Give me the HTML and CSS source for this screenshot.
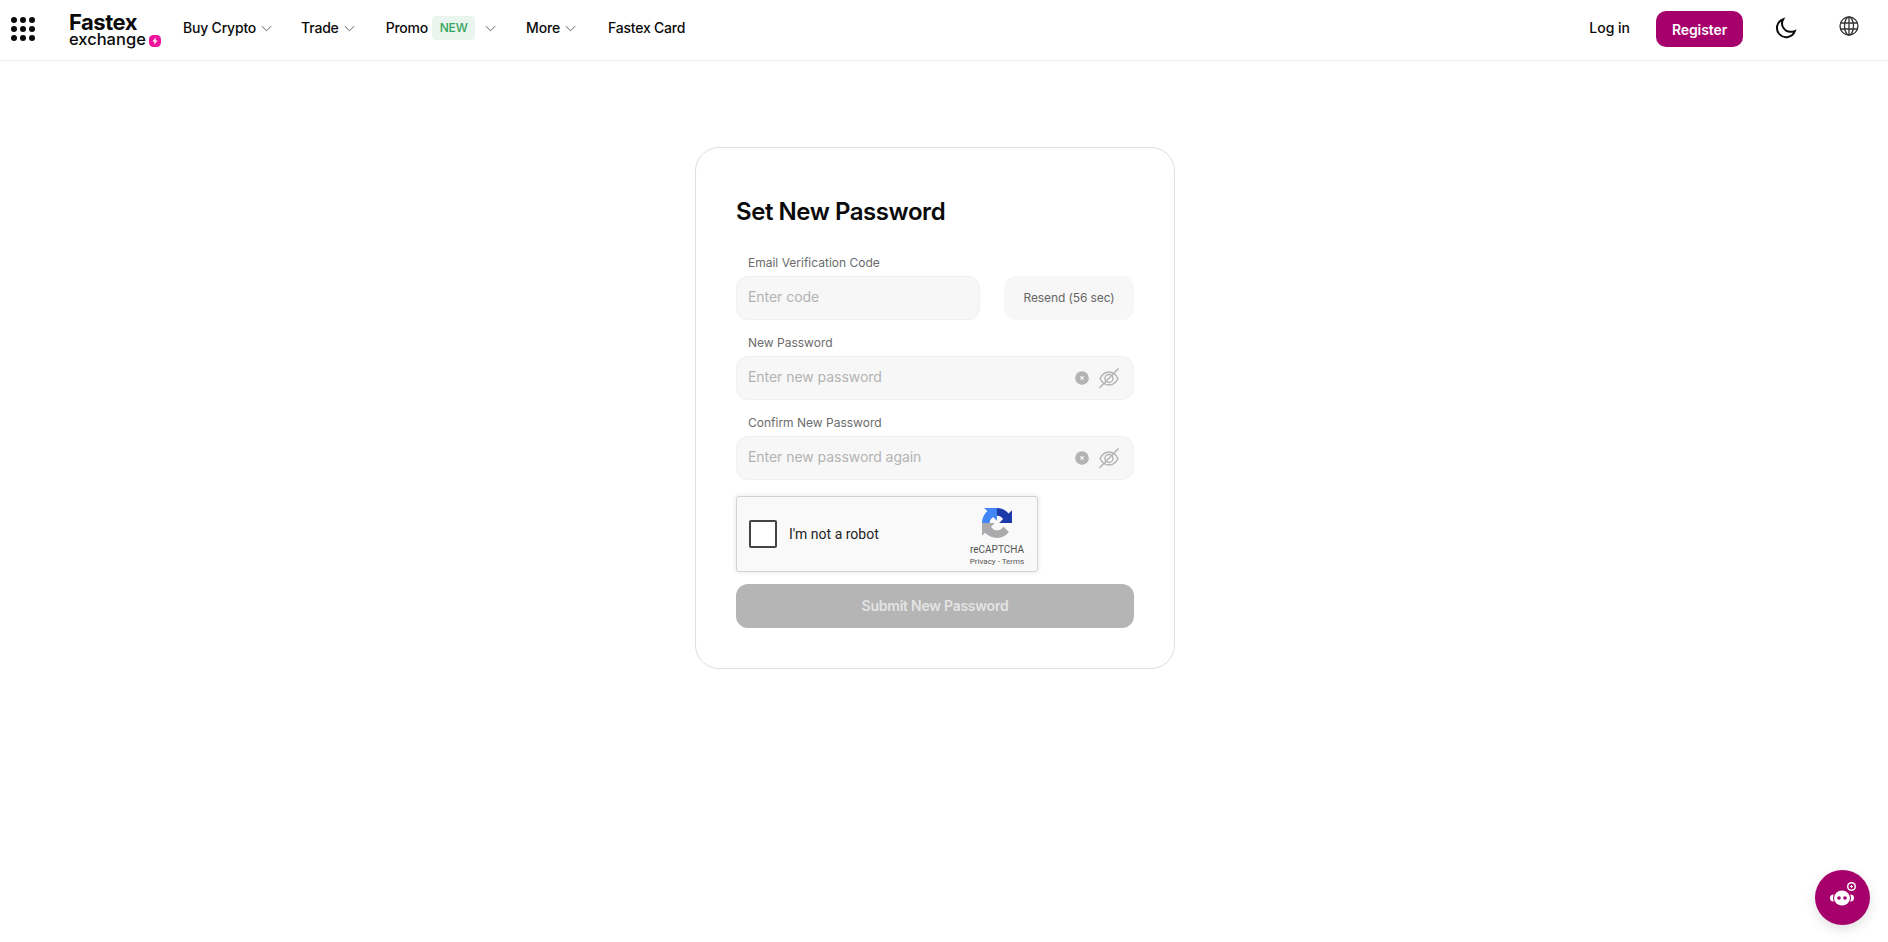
FILE: index.html
```html
<!DOCTYPE html>
<html lang="en">

<head>
    <meta charset="UTF-8" />
    <meta name="viewport" content="width=device-width, initial-scale=1.0" />
    <title>Set New Password</title>
    <link rel="stylesheet" href="styles.css">
</head>

<body>
    <!-- Header -->
    <header class="header">
        <div class="apps-grid">
            <i></i><i></i><i></i><i></i><i></i><i></i><i></i><i></i><i></i>
        </div>
        <a class="logo" href="#">
            <span class="logo-top">Fastex</span>
            <span class="logo-bottom">exchange
                <svg class="logo-bolt" viewBox="0 0 12 12">
                    <rect width="12" height="12" rx="4.5" fill="#f0129a" />
                    <path d="M6.9 2.2 3.4 6.6h2.2l-.5 3.2 3.5-4.4H6.4z" fill="#fff" />
                </svg>
            </span>
        </a>
        <nav class="nav">
            <a class="nav-item nav-buy" href="#">Buy Crypto
                <svg class="chevron" viewBox="0 0 12 7"><path d="M1 1l5 5 5-5" /></svg>
            </a>
            <a class="nav-item nav-trade" href="#">Trade
                <svg class="chevron" viewBox="0 0 12 7"><path d="M1 1l5 5 5-5" /></svg>
            </a>
            <a class="nav-item nav-promo" href="#">Promo
                <span class="badge-new">NEW</span>
                <svg class="chevron" viewBox="0 0 12 7"><path d="M1 1l5 5 5-5" /></svg>
            </a>
            <a class="nav-item nav-more" href="#">More
                <svg class="chevron" viewBox="0 0 12 7"><path d="M1 1l5 5 5-5" /></svg>
            </a>
            <a class="nav-item" href="#">Fastex Card</a>
        </nav>
        <div class="header-right">
            <a class="login" href="#">Log in</a>
            <button class="register">Register</button>
            <svg class="moon" viewBox="0 0 24 24">
                <path d="M9.2 3.2a9.2 9.2 0 1 0 11.6 11.9 8 8 0 0 1-3.2.6A8.4 8.4 0 0 1 9.2 3.2z" />
            </svg>
            <svg class="globe" viewBox="0 0 20 20">
                <circle cx="10" cy="10" r="9" />
                <ellipse cx="10" cy="10" rx="4.500" ry="9" />
                <path d="M1.600 7h16.800M1.600 13h16.800M10 1v18" />
            </svg>
        </div>
    </header>

    <main class="main">
        <form class="card">
            <h1 class="title">Set New Password</h1>

            <label class="label">Email Verification Code</label>
            <div class="code-row">
                <input class="input" type="text" placeholder="Enter code" />
                <button class="resend" type="button">Resend (56 sec)</button>
            </div>

            <label class="label">New Password</label>
            <div class="password-box">
                <input class="input" type="password" placeholder="Enter new password" />
                <svg class="clear-icon" viewBox="0 0 14 14">
                    <circle cx="7" cy="7" r="6.800" fill="#b3b3b3" />
                    <path d="M5.400 5.400l3.200 3.200M8.600 5.400 5.400 8.600" stroke="#f7f7f7" stroke-width="1.200" />
                </svg>
                <svg class="eye-icon" viewBox="0 0 22 22">
                    <path d="M2 11.500C4 7.500 7 5 11 5s7 2.500 9 6.500c-2 4-5 6.500-9 6.500s-7-2.500-9-6.500z" />
                    <circle cx="11" cy="11.500" r="4" />
                    <path d="M1.500 21 20.500 1.500" />
                </svg>
            </div>

            <label class="label">Confirm New Password</label>
            <div class="password-box">
                <input class="input" type="password" placeholder="Enter new password again" />
                <svg class="clear-icon" viewBox="0 0 14 14">
                    <circle cx="7" cy="7" r="6.800" fill="#b3b3b3" />
                    <path d="M5.400 5.400l3.200 3.200M8.600 5.400 5.400 8.600" stroke="#f7f7f7" stroke-width="1.200" />
                </svg>
                <svg class="eye-icon" viewBox="0 0 22 22">
                    <path d="M2 11.500C4 7.500 7 5 11 5s7 2.500 9 6.500c-2 4-5 6.500-9 6.500s-7-2.500-9-6.500z" />
                    <circle cx="11" cy="11.500" r="4" />
                    <path d="M1.500 21 20.500 1.500" />
                </svg>
            </div>

            <div class="captcha">
                <span class="captcha-box"></span>
                <span class="captcha-text">I'm not a robot</span>
                <div class="captcha-brand">
                    <svg class="captcha-logo" viewBox="0 0 64 64">
                        <path d="M64 31.955l-.033-1.37V4.687l-7.16 7.16C50.948 4.674 42.033.093 32.05.093c-10.4 0-19.622 4.96-25.458 12.64l11.736 11.86a15.55 15.55 0 0 1 4.754-5.334c2.05-1.6 4.952-2.906 8.968-2.906.485 0 .86.057 1.135.163 4.976.393 9.288 3.14 11.828 7.124l-8.307 8.307 32.294.001" fill="#1c3aa9" />
                        <path d="M31.862.001l-1.37.033H4.593l7.16 7.16C4.58 13.053 0 21.968 0 31.95c0 10.4 4.96 19.622 12.64 25.458l11.86-11.736a15.55 15.55 0 0 1-5.334-4.754c-1.6-2.05-2.906-4.952-2.906-8.968 0-.485.057-.86.163-1.135.393-4.976 3.14-9.288 7.124-11.828l8.307 8.307L31.862.001" fill="#4285f4" />
                        <path d="M.001 31.953l.033 1.37v25.9l7.16-7.160c5.860 7.173 14.774 11.754 24.757 11.754 10.400 0 19.622-4.960 25.458-12.640l-11.736-11.860a15.550 15.550 0 0 1-4.754 5.334c-2.050 1.600-4.952 2.906-8.968 2.906-.485 0-.860-.057-1.135-.163-4.976-.393-9.288-3.140-11.828-7.124l8.307-8.307-32.294-.001" fill="#ababab" />
                    </svg>
                    <span class="captcha-name">reCAPTCHA</span>
                    <span class="captcha-links">Privacy - Terms</span>
                </div>
            </div>

            <button class="submit" type="button">Submit New Password</button>
        </form>
    </main>

    <!-- Chat bot -->
    <button class="bot" type="button" aria-label="Chat">
        <svg viewBox="0 0 32 32">
            <circle cx="6.500" cy="16" r="3.500" fill="#fff" />
            <circle cx="23.500" cy="16" r="3.500" fill="#fff" />
            <ellipse cx="15" cy="16" rx="9" ry="8.500" fill="#a5006b" />
            <ellipse cx="15" cy="16" rx="8" ry="7.500" fill="#fff" />
            <circle cx="12" cy="16" r="1.800" fill="#a5006b" />
            <circle cx="18" cy="16" r="1.800" fill="#a5006b" />
            <circle cx="24.500" cy="4.500" r="4.500" fill="#fff" />
            <circle cx="24.500" cy="4.500" r="3" fill="#a5006b" />
            <path d="M24.500 3v3M23 4.500h3" stroke="#fff" stroke-width="1" />
        </svg>
    </button>
</body>

</html>
```
FILE: styles.css
```css
:root {
    --brand: #a5006b;
    --field-bg: #f7f7f7;
    --field-border: #f0f0f0;
    --muted: #b3b3b3;
    --text-color: #0a0a0a;
}

* {
    box-sizing: border-box;
}

body {
    font-family: Inter, "Liberation Sans", sans-serif;
    margin: 0;
    height: 942px;
    overflow: hidden;
    background: #fff;
    color: var(--text-color);
}

a {
    color: inherit;
    text-decoration: none;
}

button {
    font-family: inherit;
    border: none;
}

/* Header */
.header {
    display: flex;
    align-items: center;
    height: 61px;
    padding-left: 11px;
    border-bottom: 1px solid #ececec;
}

.apps-grid {
    display: grid;
    grid-template-columns: repeat(3, 6px);
    gap: 3px;
    width: 24px;
    margin-top: -2px;
}

.apps-grid i {
    width: 6px;
    height: 6px;
    border-radius: 50%;
    background: #0a0a0a;
}

.logo {
    display: flex;
    flex-direction: column;
    margin-left: 34px;
    width: 93px;
}

.logo-top {
    font-size: 22px;
    line-height: 19px;
    font-weight: 700;
    letter-spacing: -0.5px;
}

.logo-bottom {
    display: flex;
    align-items: center;
    font-size: 16.500px;
    line-height: 15px;
    font-weight: 500;
    gap: 3px;
}

.logo-bolt {
    width: 12px;
    height: 12px;
    margin-top: 2px;
}

.nav {
    display: flex;
    align-items: center;
    margin-left: 21px;
    margin-top: -5px;
    font-size: 14px;
    font-weight: 500;
    letter-spacing: -0.2px;
}

.nav-item {
    display: flex;
    align-items: center;
}

.nav-buy {
    margin-right: 29px;
}

.nav-trade {
    margin-right: 31px;
}

.nav-promo {
    margin-right: 30px;
}

.nav-more {
    margin-right: 32px;
}

.chevron {
    width: 11px;
    height: 7px;
    margin-left: 5px;
    margin-top: 2px;
    fill: none;
    stroke: #555;
    stroke-width: 1;
}

.badge-new {
    display: flex;
    align-items: center;
    justify-content: center;
    width: 43px;
    height: 24px;
    margin-left: 4px;
    margin-right: 5px;
    border-radius: 4px;
    background: #e9f5ee;
    color: #34a45c;
    font-size: 12px;
}

.header-right {
    display: flex;
    align-items: center;
    margin-left: auto;
    padding-right: 29px;
}

.login {
    font-size: 14px;
    font-weight: 500;
    margin-top: -6px;
}

.register {
    width: 87px;
    height: 36px;
    margin-left: 26px;
    margin-top: -2px;
    border-radius: 10px;
    background: var(--brand);
    color: #fff;
    font-size: 14px;
    font-weight: 600;
    letter-spacing: -0.1px;
}

.moon {
    width: 24px;
    height: 24px;
    margin-left: 31px;
    margin-top: -5px;
    fill: none;
    stroke: #0a0a0a;
    stroke-width: 2;
}

.globe {
    width: 20px;
    height: 20px;
    margin-left: 41px;
    margin-top: -9px;
    fill: none;
    stroke: #333;
    stroke-width: 1.300;
}

/* Form card */
.main {
    display: flex;
    justify-content: center;
    padding: 86px 18px 0 0;
}

.card {
    width: 480px;
    height: 522px;
    padding: 40px;
    border: 1px solid #dedede;
    border-radius: 24px;
}

.title {
    margin: 0 0 21px;
    padding-top: 1px;
    font-size: 24px;
    line-height: 46px;
    font-weight: 600;
    letter-spacing: -0.45px;
}

.label {
    display: block;
    height: 20px;
    padding-left: 12px;
    padding-top: 1px;
    font-size: 12px;
    line-height: 12px;
    color: #6b6b6b;
}

.code-row {
    display: flex;
    gap: 24px;
    margin-bottom: 16px;
}

.input {
    width: 100%;
    height: 44px;
    padding: 0 11px 3px;
    font-family: inherit;
    font-size: 14px;
    letter-spacing: -0.05px;
    background: var(--field-bg);
    border: 1px solid var(--field-border);
    border-radius: 12px;
    outline: none;
}

.input::placeholder {
    color: var(--muted);
    opacity: 1;
}

.code-row .input {
    width: 244px;
}

.resend {
    width: 130px;
    height: 44px;
    padding-bottom: 3px;
    background: var(--field-bg);
    border-radius: 12px;
    font-size: 12px;
    letter-spacing: -0.1px;
    color: #666;
}

.password-box {
    display: flex;
    align-items: center;
    height: 44px;
    margin-bottom: 16px;
    padding-right: 13px;
    background: var(--field-bg);
    border: 1px solid var(--field-border);
    border-radius: 12px;
}

.password-box .input {
    flex: 1;
    height: 42px;
    border: none;
    background: transparent;
    padding-left: 11px;
}

.clear-icon {
    width: 14px;
    height: 14px;
    margin-right: 9px;
}

.eye-icon {
    width: 22px;
    height: 22px;
    fill: none;
    stroke: #b3b3b3;
    stroke-width: 1.500;
}

/* reCAPTCHA */
.captcha {
    display: flex;
    align-items: center;
    width: 302px;
    height: 76px;
    margin-bottom: 12px;
    padding-left: 12px;
    background: #f9f9f9;
    border: 1px solid #d3d3d3;
    border-radius: 3px;
    box-shadow: 0 0 4px 1px rgba(0, 0, 0, 0.08);
    font-family: Roboto, sans-serif;
}

.captcha-box {
    width: 28px;
    height: 28px;
    background: #fff;
    border: 2px solid #444;
    border-radius: 2px;
}

.captcha-text {
    margin-left: 12px;
    font-size: 14px;
    color: #222;
}

.captcha-brand {
    display: flex;
    flex-direction: column;
    align-items: center;
    margin-left: auto;
    width: 70px;
    margin-right: 5px;
    color: #555;
}

.captcha-logo {
    width: 30px;
    height: 30px;
    margin-top: 8px;
}

.captcha-name {
    margin-top: 5px;
    font-size: 10px;
    line-height: 13px;
}

.captcha-links {
    font-size: 8px;
    line-height: 12px;
}

.submit {
    display: block;
    width: 100%;
    height: 44px;
    padding-bottom: 2px;
    border-radius: 12px;
    background: #b5b5b5;
    color: rgba(255, 255, 255, 0.65);
    font-size: 14px;
    font-weight: 600;
    letter-spacing: -0.25px;
}

/* Chat bot */
.bot {
    position: fixed;
    right: 18px;
    bottom: 17px;
    display: flex;
    align-items: center;
    justify-content: center;
    width: 55px;
    height: 55px;
    padding: 0;
    border-radius: 50%;
    background: var(--brand);
    box-shadow: 0 4px 12px rgba(0, 0, 0, 0.12);
}

.bot svg {
    width: 32px;
    height: 32px;
}
```
